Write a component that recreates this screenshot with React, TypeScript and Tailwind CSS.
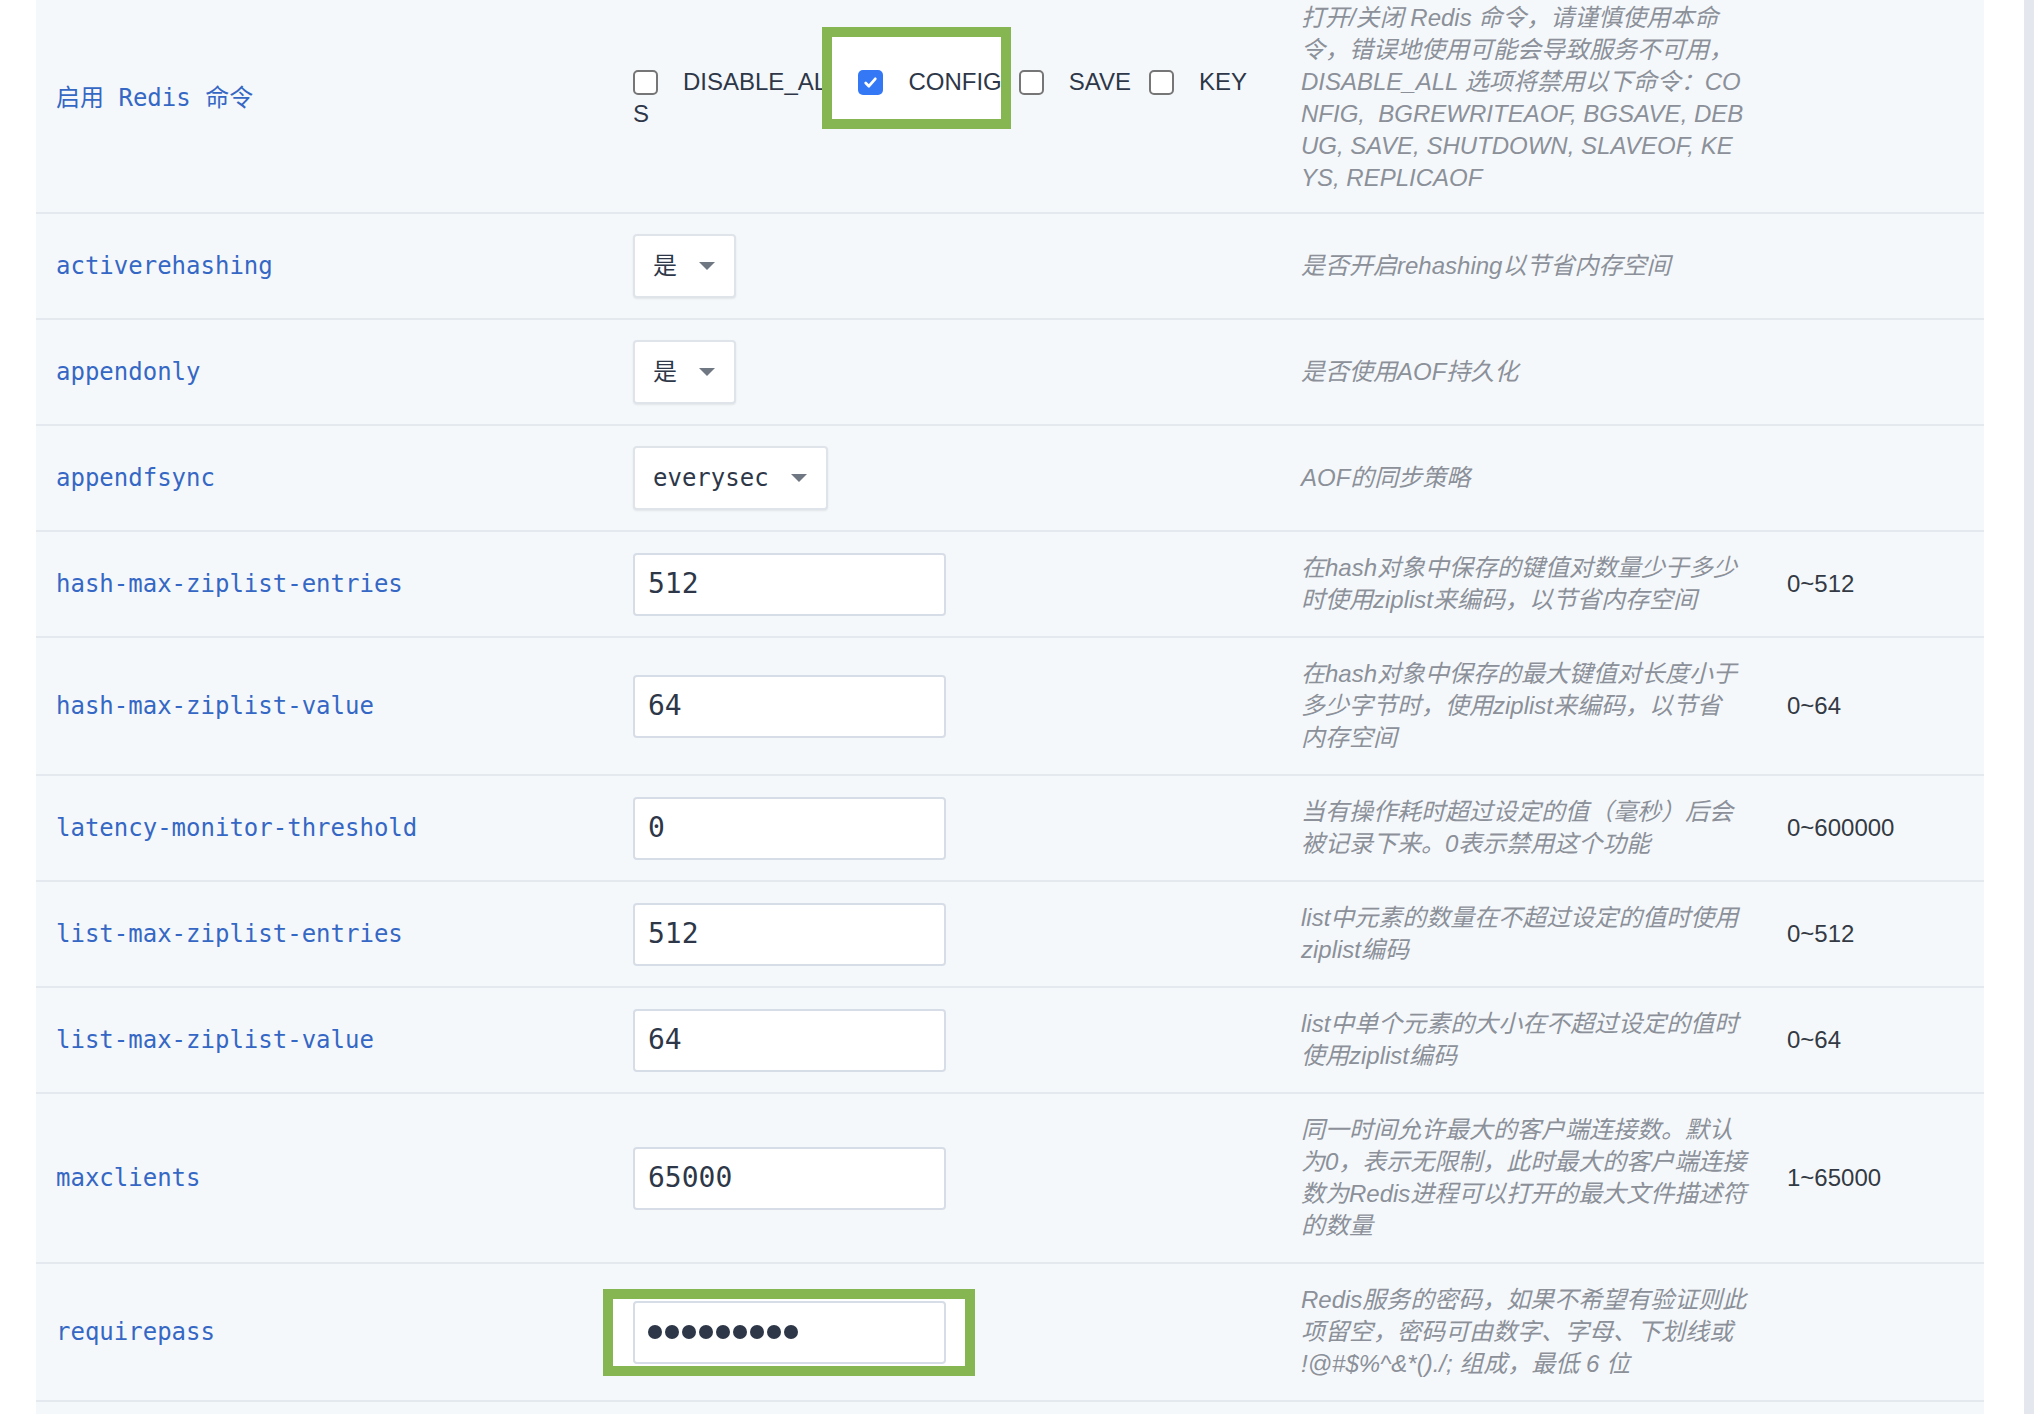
import React from "react";

type Row = {
	name: string;
	kind: "select" | "input" | "password";
	value?: string;
	desc: string[];
	range?: string;
};

const rows: Row[] = [
	{ name: "activerehashing", kind: "select", value: "是", desc: ["是否开启rehashing以节省内存空间"] },
	{ name: "appendonly", kind: "select", value: "是", desc: ["是否使用AOF持久化"] },
	{ name: "appendfsync", kind: "select", value: "everysec", desc: ["AOF的同步策略"] },
	{
		name: "hash-max-ziplist-entries",
		kind: "input",
		value: "512",
		desc: ["在hash对象中保存的键值对数量少于多少", "时使用ziplist来编码，以节省内存空间"],
		range: "0~512",
	},
	{
		name: "hash-max-ziplist-value",
		kind: "input",
		value: "64",
		desc: ["在hash对象中保存的最大键值对长度小于", "多少字节时，使用ziplist来编码，以节省", "内存空间"],
		range: "0~64",
	},
	{
		name: "latency-monitor-threshold",
		kind: "input",
		value: "0",
		desc: ["当有操作耗时超过设定的值（毫秒）后会", "被记录下来。0表示禁用这个功能"],
		range: "0~600000",
	},
	{
		name: "list-max-ziplist-entries",
		kind: "input",
		value: "512",
		desc: ["list中元素的数量在不超过设定的值时使用", "ziplist编码"],
		range: "0~512",
	},
	{
		name: "list-max-ziplist-value",
		kind: "input",
		value: "64",
		desc: ["list中单个元素的大小在不超过设定的值时", "使用ziplist编码"],
		range: "0~64",
	},
	{
		name: "maxclients",
		kind: "input",
		value: "65000",
		desc: [
			"同一时间允许最大的客户端连接数。默认",
			"为0，表示无限制，此时最大的客户端连接",
			"数为Redis进程可以打开的最大文件描述符",
			"的数量",
		],
		range: "1~65000",
	},
	{
		name: "requirepass",
		kind: "password",
		desc: ["Redis服务的密码，如果不希望有验证则此", "项留空，密码可由数字、字母、下划线或", "!@#$%^&*()./; 组成，最低 6 位"],
	},
];

const Checkbox = ({ checked }: { checked?: boolean }) =>
	checked ? (
		<span className="inline-flex h-[25px] w-[25px] shrink-0 items-center justify-center rounded-[5px] bg-[#3478f6]">
			<svg viewBox="0 0 16 16" className="h-[17px] w-[17px]" fill="none" stroke="white" strokeWidth="2.6" strokeLinecap="round" strokeLinejoin="round">
				<path d="M3.5 8.5l3 3 6-7" />
			</svg>
		</span>
	) : (
		<span className="inline-block h-[25px] w-[25px] shrink-0 rounded-[5px] border-2 border-[#767676] bg-white" />
	);

const Caret = () => (
	<svg viewBox="0 0 16 8" className="h-[8px] w-[16px] shrink-0">
		<path d="M0 0h16L8 8z" fill="#6f7782" />
	</svg>
);

const Desc = ({ lines }: { lines: string[] }) => (
	<div className="font-['Liberation_Sans','Noto_Sans_CJK_SC',sans-serif] text-[24px] italic leading-[32px] text-[#8b9099]">
		{lines.map((l, i) => (
			<div key={i} className="whitespace-pre">
				{l}
			</div>
		))}
	</div>
);

const Control = ({ row }: { row: Row }) => {
	if (row.kind === "select") {
		return (
			<div className="inline-flex h-[64px] items-center gap-[22px] rounded-[4px] border-2 border-[#dfe4ea] bg-white pl-[18px] pr-[19px] font-['DejaVu_Sans_Mono','Noto_Sans_CJK_SC',monospace] text-[24px] text-[#2d3748] shadow-[0_1px_2px_rgba(0,0,0,0.08)]">
				<span>{row.value}</span>
				<Caret />
			</div>
		);
	}
	if (row.kind === "password") {
		return (
			<div className="relative w-[313px]">
				<div className="absolute -bottom-[12px] -left-[30px] -right-[29px] -top-[12px] border-[10px] border-[#85b651] bg-white" />
				<div className="relative z-10 flex h-[63px] items-center gap-[3px] rounded-[4px] border-2 border-[#d6dde6] bg-white pl-[13px]">
					{Array.from({ length: 9 }).map((_, i) => (
						<span key={i} className="h-[14px] w-[14px] rounded-full bg-[#2d3748]" />
					))}
				</div>
			</div>
		);
	}
	return (
		<div className="flex h-[63px] w-[313px] items-center rounded-[4px] border-2 border-[#d6dde6] bg-white pl-[13px] font-['DejaVu_Sans_Mono',monospace] text-[28px] text-[#2d3748]">
			{row.value}
		</div>
	);
};

const Cells = ({
	label,
	control,
	desc,
	range,
	pad = "py-[20px]",
}: {
	label: string;
	control: React.ReactNode;
	desc: string[];
	range?: string;
	pad?: string;
}) => (
	<div className={`grid grid-cols-[577px_668px_486px_1fr] items-center border-b-2 border-[#e4e9ef] bg-[#f5f8fb] ${pad}`}>
		<div className="px-[20px] font-['DejaVu_Sans_Mono','Noto_Sans_CJK_SC',monospace] text-[24px] text-[#3567c4]">{label}</div>
		<div className="px-[20px]">{control}</div>
		<div className="px-[20px]">
			<Desc lines={desc} />
		</div>
		<div className="px-[20px] font-['Liberation_Sans',sans-serif] text-[24px] text-[#333a44]">{range}</div>
	</div>
);

const Commands = () => (
	<div className="font-['Liberation_Sans',sans-serif] text-[24px] leading-[32px] text-[#2d3748]">
		<div className="flex h-[32px] items-center">
			<Checkbox />
			<span className="ml-[25px] mr-[18px]">DISABLE_ALL</span>
			<span className="relative inline-flex h-[32px] items-center">
				<span className="absolute -left-[36px] -top-[39px] h-[102px] w-[189px] bg-white" />
				<span className="relative z-10 inline-flex items-center">
					<Checkbox checked />
					<span className="ml-[25px] mr-[17px]">CONFIG</span>
				</span>
				<span className="absolute -left-[36px] -top-[39px] z-20 h-[102px] w-[189px] border-[10px] border-[#85b651]" />
			</span>
			<Checkbox />
			<span className="ml-[25px] mr-[18px]">SAVE</span>
			<Checkbox />
			<span className="ml-[25px]">KEY</span>
		</div>
		<div>S</div>
	</div>
);

export default function App() {
	return (
		<div className="flex h-[1414px] w-full overflow-hidden bg-white">
			<div className="w-[36px] shrink-0" />
			<div className="-mt-[18px] w-[1948px] shrink-0">
				<Cells
					label="启用 Redis 命令"
					pad="pt-[20px] pb-[18px]"
					control={<Commands />}
					desc={[
						"打开/关闭 Redis 命令，请谨慎使用本命",
						"令，错误地使用可能会导致服务不可用，",
						"DISABLE_ALL 选项将禁用以下命令：CO",
						"NFIG,  BGREWRITEAOF, BGSAVE, DEB",
						"UG, SAVE, SHUTDOWN, SLAVEOF, KE",
						"YS, REPLICAOF",
					]}
				/>
				{rows.map((r) => (
					<Cells key={r.name} label={r.name} control={<Control row={r} />} desc={r.desc} range={r.range} />
				))}
				<div className="h-[120px] bg-[#f5f8fb]" />
			</div>
			<div className="w-[40px] shrink-0" />
			<div className="w-[10px] shrink-0 bg-[#e4e8ee]" />
		</div>
	);
}
